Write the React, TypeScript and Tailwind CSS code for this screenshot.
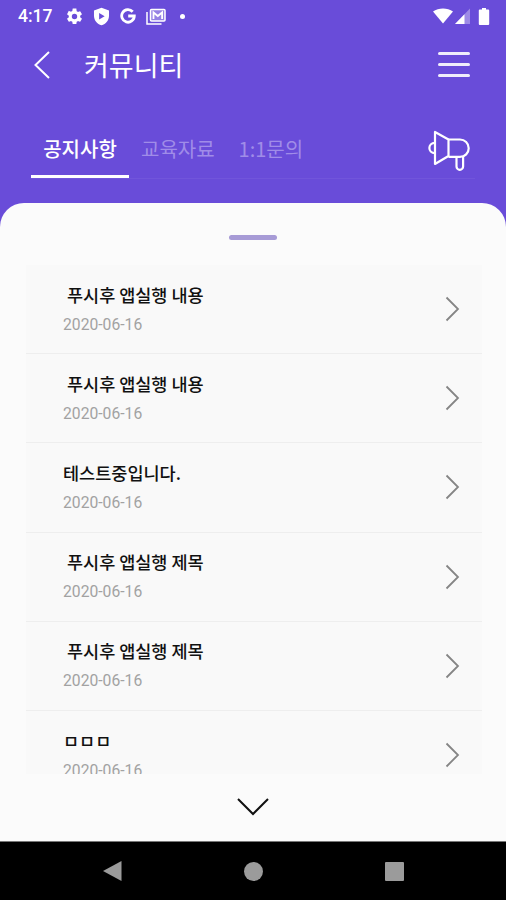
type Notice = {
  id: number;
  title: string;
  date: string;
};

const notices: Notice[] = [
  { id: 1, title: ' 푸시후 앱실행 내용', date: '2020-06-16' },
  { id: 2, title: ' 푸시후 앱실행 내용', date: '2020-06-16' },
  { id: 3, title: '테스트중입니다.', date: '2020-06-16' },
  { id: 4, title: ' 푸시후 앱실행 제목', date: '2020-06-16' },
  { id: 5, title: ' 푸시후 앱실행 제목', date: '2020-06-16' },
  { id: 6, title: 'ㅁㅁㅁ', date: '2020-06-16' },
];

function StatusBar() {
  return (
    <div className="flex h-8 shrink-0 items-center pr-4 pl-[18px] text-white">
      <span className="w-[47px] font-['Roboto',sans-serif] text-[17.5px] leading-8 font-medium">4:17</span>

      <svg className="h-[19px] w-[19px] shrink-0" viewBox="0 0 24 24" fill="currentColor">
        <path d="M19.14 12.94c.04-.3.06-.61.06-.94s-.02-.64-.07-.94l2.03-1.58a.49.49 0 0 0 .12-.61l-1.92-3.32a.49.49 0 0 0-.59-.22l-2.39.96c-.5-.38-1.03-.7-1.62-.94l-.36-2.54A.48.48 0 0 0 13.92 2h-3.84c-.24 0-.43.17-.47.41l-.36 2.54c-.59.24-1.13.57-1.62.94l-2.39-.96a.48.48 0 0 0-.59.22L2.74 8.87a.48.48 0 0 0 .12.61l2.03 1.58c-.05.3-.09.63-.09.94s.02.64.07.94l-2.03 1.58a.49.49 0 0 0-.12.61l1.92 3.32c.12.22.37.29.59.22l2.39-.96c.5.38 1.03.7 1.62.94l.36 2.54c.05.24.24.41.48.41h3.84c.24 0 .44-.17.47-.41l.36-2.54c.59-.24 1.13-.56 1.62-.94l2.39.96c.22.08.47 0 .59-.22l1.92-3.32a.48.48 0 0 0-.12-.61zM12 15.4a3.4 3.4 0 1 1 0-6.8 3.4 3.4 0 0 1 0 6.8z" />
      </svg>
      <svg className="ml-[8px] h-[19px] w-[19px] shrink-0" viewBox="0 0 24 24" fill="currentColor" fillRule="evenodd">
        <path d="M12 1L2.5 4.500v6.500c0 5.500 4 10.700 9.500 12 5.500-1.300 9.500-6.500 9.500-12V4.500zM9 7.500l7 4.200-7 4.200z" />
      </svg>
      <svg className="ml-[9px] h-[16px] w-[16px] shrink-0" viewBox="0 0 16 16" fill="none" stroke="currentColor" strokeWidth="2.8">
        <path d="M12.700 3.700A6.300 6.300 0 1 0 14.300 8H8.200" />
      </svg>
      <svg className="ml-[10px] h-[17px] w-[20px] shrink-0" viewBox="0 0 20 17" fill="none" stroke="currentColor">
        <path d="M1 4v12h14.500" strokeWidth="1.500" />
        <rect x="4.500" y="1.500" width="14.500" height="11.500" rx="1" fill="currentColor" fillOpacity=".3" strokeWidth="1.500" />
        <path d="M7.500 11V4.500l4.300 3.500 4.300-3.500V11" strokeWidth="1.800" />
      </svg>
      <span className="ml-[14px] h-[5px] w-[5px] rounded-full bg-white" />

      <svg className="ml-auto h-[16px] w-[20px] shrink-0" viewBox="0 0 20 16" fill="currentColor">
        <path d="M0 3.500C5.500-.5 14.500-.5 20 3.500L10 15.500z" />
      </svg>
      <svg className="ml-[2px] h-[16px] w-[16px] shrink-0" viewBox="0 0 16 16" fill="currentColor">
        <path d="M15 .5V16H0z" opacity=".35" />
        <path d="M9.500 6.200V16H0z" />
      </svg>
      <svg className="ml-[7px] h-[17px] w-[12px] shrink-0" viewBox="0 0 12 17" fill="currentColor">
        <path d="M4 0h4v1.500h2.200q1 0 1 1v13.500q0 1-1 1H1.800q-1 0-1-1V2.500q0-1 1-1H4z" />
      </svg>
    </div>
  );
}

function Header() {
  return (
    <header className="flex h-[65px] shrink-0 items-center pr-[36px] pl-[33px] text-white">
      <svg className="h-[28px] w-[18px]" viewBox="0 0 18 28" fill="none" stroke="currentColor" strokeWidth="2">
        <path d="M16 1L2.500 14 16 27" />
      </svg>
      <h1 className="ml-[33px] text-[27px] leading-8">커뮤니티</h1>
      <div className="ml-auto flex w-8 flex-col gap-2">
        <span className="h-[3px] rounded-full bg-white/90" />
        <span className="h-[3px] rounded-full bg-white/90" />
        <span className="h-[3px] rounded-full bg-white/90" />
      </div>
    </header>
  );
}

function Tabs() {
  return (
    <div className="mx-[31px] mt-[22px] flex h-[60px] shrink-0 items-stretch border-b border-white/5 text-[20px] leading-[60px] text-[#a08ce8]">
      <span className="w-[98px] border-b-[3px] border-white text-center font-medium text-white">공지사항</span>
      <span className="ml-[12px]">교육자료</span>
      <span className="ml-[24px]">1:1문의</span>
      <svg className="mt-[11px] mr-[4px] ml-auto h-[42px] w-[44px]" viewBox="0 0 44 42" fill="none" stroke="white" strokeWidth="2.200" strokeLinejoin="round">
        <path d="M8 2v32l13.500-8V9.500z" />
        <path d="M21.500 9.500H33a8.700 8.700 0 0 1 0 17.400H21.500" />
        <path d="M8 12.800c-7.500 0-7.500 10.400 0 10.400" />
        <path d="M29.500 27v9.500a3.300 3.300 0 0 0 6.600 0V27" />
      </svg>
    </div>
  );
}

function NoticeRow({ notice }: { notice: Notice }) {
  return (
    <li className="flex h-[89.200px] shrink-0 items-center border-b-[1.500px] border-[#eeeeee] pr-[22px] pl-[37px]">
      <div>
        <p className="text-[17.500px] leading-[26px] font-medium whitespace-pre text-[#111]">{notice.title}</p>
        <p className="mt-[5px] font-['Roboto',sans-serif] text-[15.700px] leading-6 text-[#a2a2a2]">{notice.date}</p>
      </div>
      <svg className="ml-auto h-[26px] w-[15px]" viewBox="0 0 15 26" fill="none" stroke="#858585" strokeWidth="1.800">
        <path d="M1.500 1.500L13 13 1.500 24.500" />
      </svg>
    </li>
  );
}

function NavBar() {
  return (
    <nav className="flex h-[59px] shrink-0 items-center justify-between border-t border-[#777] bg-black px-[102px] text-[#9b9b9b]">
      <svg className="h-[22px] w-[20px]" viewBox="0 0 20 22" fill="currentColor">
        <path d="M19.500 1v20L1 11z" />
      </svg>
      <span className="h-[19px] w-[19px] rounded-full bg-[#9b9b9b]" />
      <span className="h-[19px] w-[19px] rounded-[1px] bg-[#9b9b9b]" />
    </nav>
  );
}

export default function App() {
  return (
    <div className="flex h-[900px] w-[506px] flex-col overflow-hidden bg-[#694cd9] font-['Noto_Sans_CJK_KR',sans-serif]">
      <StatusBar />
      <Header />
      <Tabs />

      <main className="mt-[23.500px] flex min-h-0 flex-1 flex-col items-center rounded-t-[24px] bg-[#fbfbfb]">
        <span className="mt-[32px] h-[5px] w-[48px] shrink-0 rounded-full bg-[#a79bd6]" />
        <ul className="mt-[25.500px] ml-[2px] flex h-[509px] w-[456px] shrink-0 flex-col overflow-hidden bg-[#f9f9f9]">
          {notices.map((notice) => (
            <NoticeRow key={notice.id} notice={notice} />
          ))}
        </ul>
        <svg className="mt-[24px] h-[18px] w-[32px] shrink-0" viewBox="0 0 32 18" fill="none" stroke="#111" strokeWidth="2">
          <path d="M1 1l15 15L31 1" />
        </svg>
      </main>

      <NavBar />
    </div>
  );
}
